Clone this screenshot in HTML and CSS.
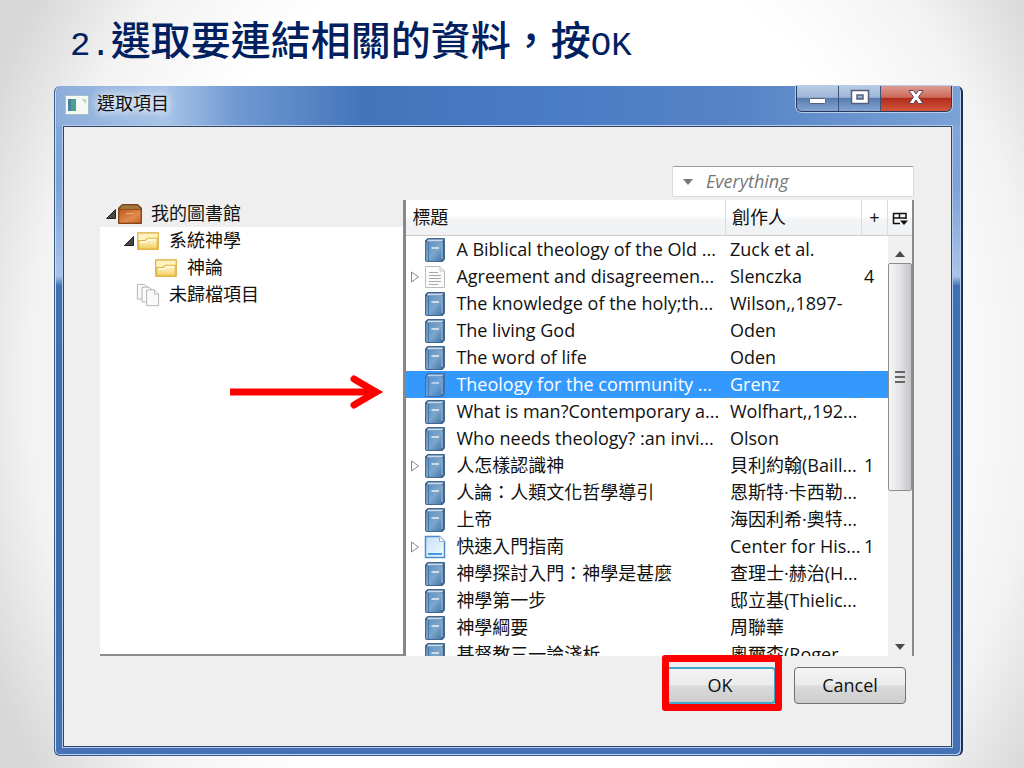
FILE: index.html
```html
<!DOCTYPE html>
<html lang="zh-Hant">
<head>
	<meta charset="UTF-8">
	<meta name="viewport" content="width=device-width, initial-scale=1.0">
	<title>選取項目</title>
	<link rel="stylesheet" href="styles.css">
</head>
<body>

	<svg class="defs" aria-hidden="true">
		<defs>
			<linearGradient id="bookFill" x1="0" y1="0" x2="1" y2="1">
				<stop offset="0" stop-color="#5f8fbf"/>
				<stop offset=".55" stop-color="#7ba6cd"/>
				<stop offset="1" stop-color="#4678a8"/>
			</linearGradient>
			<linearGradient id="folderFill" x1="0" y1="0" x2="0" y2="1">
				<stop offset="0" stop-color="#fffbe0"/>
				<stop offset="1" stop-color="#f3cd58"/>
			</linearGradient>
			<linearGradient id="boxFill" x1="0" y1="0" x2="1" y2="1">
				<stop offset="0" stop-color="#bb5a20"/>
				<stop offset=".6" stop-color="#e08a4c"/>
				<stop offset="1" stop-color="#c26428"/>
			</linearGradient>
			<linearGradient id="docFill" x1="0" y1="0" x2="1" y2="1">
				<stop offset="0" stop-color="#c4e0f8"/>
				<stop offset="1" stop-color="#f4fbff"/>
			</linearGradient>
		</defs>
		<symbol id="book" viewBox="0 0 22 26">
			<path d="M3.500 1.500H20.500V22L18.500 24.500H2.500Q1.500 24.500 1.500 23.500V3.500Z" fill="#3f6690" stroke="#41668f"/>
			<path d="M4 2.500H19.500L18 4.500H3Z" fill="#c9dcee"/>
			<rect x="2" y="5" width="15.500" height="19" rx="1" fill="url(#bookFill)"/>
			<path d="M18 5V22" stroke="#b9d0e6"/>
			<path d="M4.500 5V24" stroke="#4878a8"/>
			<path d="M7.500 11H15" stroke="#e6f0f9" stroke-width="1.500"/>
		</symbol>
		<symbol id="page" viewBox="0 0 22 26">
			<path d="M1.500 2.500H16L20.500 7V23.500H1.500Z" fill="#fbfbfb" stroke="#bcbcbc"/>
			<path d="M16 2.500V7H20.500" fill="#eee" stroke="#c8c8c8"/>
			<path d="M5 8.500H14M5 11.500H17M5 14.500H17M5 17.500H17M5 20.500H14" stroke="#aaa"/>
		</symbol>
		<symbol id="doc" viewBox="0 0 22 26">
			<path d="M1.500 2.500H15.500L20.500 7.500V23.500H1.500Z" fill="url(#docFill)" stroke="#4f8bcb" stroke-width="1.500"/>
			<path d="M15.500 2.500V7.500H20.500" fill="#fff" stroke="#8ab4de"/>
			<path d="M4 20H18" stroke="#3f9ae0" stroke-width="2"/>
		</symbol>
		<symbol id="folder" viewBox="0 0 24 20">
			<path d="M2.500 2.500H21.500V17.500H2.500Z" fill="#fff3bd" stroke="#d7ab3c"/>
			<path d="M3.500 17.500V9.500H9.500L11.500 7.500H20.500V17.500Z" fill="url(#folderFill)" stroke="#dfb23c"/>
			<path d="M5 11H10L12 9H19" fill="none" stroke="#fffdf0"/>
		</symbol>
		<symbol id="library" viewBox="0 0 26 22">
			<path d="M5 1.500H21L24.500 5V20.500H1.500V5Z" fill="#8a4a1c" stroke="#7b4118"/>
			<path d="M5.500 2.500H20.500L23 6H3Z" fill="#9b7a42"/>
			<rect x="2" y="6.500" width="22" height="13.500" rx="1" fill="url(#boxFill)" stroke="#9c4a16"/>
			<path d="M9.500 10.500H16.500" stroke="#eab084"/>
		</symbol>
		<symbol id="unfiled" viewBox="0 0 26 26">
			<g fill="#fafafa" stroke="#b0b0b0">
				<path d="M1.500 1.500H9L13 5V17.500H1.500Z"/>
				<path d="M6.500 4.500H14L18 8V20.500H6.500Z"/>
				<path d="M11.500 7.500H20L24.500 12V24.500H11.500Z"/>
				<path d="M20 7.500V12H24.500"/>
			</g>
		</symbol>
		<symbol id="open" viewBox="0 0 12 12">
			<path d="M10.500 1.500V10.500H1.500Z" fill="#484848" stroke="#222"/>
		</symbol>
		<symbol id="closed" viewBox="0 0 10 14">
			<path d="M1.500 2L8.500 7L1.500 12Z" fill="#fff" stroke="#888"/>
		</symbol>
	</svg>

	<main class="slide">
		<h1 class="heading"><span class="latin">2.</span>選取要連結相關的資料，按<span class="latin">OK</span></h1>

		<section class="window">
			<header class="titlebar">
				<svg class="app-icon" viewBox="0 0 24 20" aria-hidden="true">
					<rect x=".5" y=".5" width="23" height="19" rx="1" fill="#f6f8f6" stroke="#a9bccb"/>
					<rect x="3" y="4" width="8" height="12" fill="#4f9d8e"/>
					<path d="M3 4H6V16H3Z" fill="#4380a0"/>
					<path d="M17 4H21V9L19 7Z" fill="#b9d8c0"/>
				</svg>
				<span class="title">選取項目</span>
				<div class="caption">
					<button class="cap min" aria-label="Minimize">
						<svg width="20" height="10" viewBox="0 0 20 10"><rect x="1.500" y="2.500" width="16" height="5" rx="1" fill="#fff" stroke="#53627a"/></svg>
					</button>
					<button class="cap max" aria-label="Maximize">
						<svg width="20" height="16" viewBox="0 0 20 16"><path d="M1.500 1.500H18.500V14.500H1.500ZM7 6V10H13V6Z" fill="#fff" fill-rule="evenodd" stroke="#53627a" stroke-width="1.500"/></svg>
					</button>
					<button class="cap close" aria-label="Close">
						<svg width="18" height="16" viewBox="0 0 18 16"><path d="M2 1.500H6.500L9 5L11.500 1.500H16L11.500 8L16 14.500H11.500L9 11L6.500 14.500H2L6.500 8Z" fill="#fff" stroke="#6a4a52"/></svg>
					</button>
				</div>
			</header>

			<div class="client">
				<div class="filter">
					<svg width="10" height="6" viewBox="0 0 10 6" aria-hidden="true"><path d="M0 0H10L5 6Z" fill="#777"/></svg>
					<input type="text" placeholder="Everything" aria-label="Everything">
				</div>

				<div class="panes">
					<nav class="tree">
						<ul>
							<li class="node selected"><svg class="twisty"><use href="#open"/></svg><svg class="tree-icon"><use href="#library"/></svg>我的圖書館</li>
							<li class="node level1"><svg class="twisty"><use href="#open"/></svg><svg class="tree-icon"><use href="#folder"/></svg>系統神學</li>
							<li class="node level2"><span class="twisty"></span><svg class="tree-icon"><use href="#folder"/></svg>神論</li>
							<li class="node level1"><span class="twisty"></span><svg class="tree-icon"><use href="#unfiled"/></svg>未歸檔項目</li>
						</ul>
						<svg class="arrow" width="154" height="34" viewBox="0 0 154 34" aria-hidden="true">
							<path d="M0 17H142" stroke="#f00" stroke-width="7"/>
							<path d="M124 4L146 17L124 30" fill="none" stroke="#f00" stroke-width="7" stroke-linecap="round"/>
							<path d="M138 9L153 17L138 25Z" fill="#f00"/>
						</svg>
					</nav>

					<div class="items">
						<table>
							<thead>
								<tr><th class="col-title">標題</th><th class="col-creator">創作人</th><th class="col-count">+</th></tr>
							</thead>
							<tbody>
								<tr><td><span class="twist"></span><svg class="icon"><use href="#book"/></svg>A Biblical theology of the Old ...</td><td>Zuck et al.</td><td></td></tr>
								<tr><td><svg class="twist"><use href="#closed"/></svg><svg class="icon"><use href="#page"/></svg>Agreement and disagreemen...</td><td>Slenczka</td><td>4</td></tr>
								<tr><td><span class="twist"></span><svg class="icon"><use href="#book"/></svg>The knowledge of the holy;th...</td><td>Wilson,,1897-</td><td></td></tr>
								<tr><td><span class="twist"></span><svg class="icon"><use href="#book"/></svg>The living God</td><td>Oden</td><td></td></tr>
								<tr><td><span class="twist"></span><svg class="icon"><use href="#book"/></svg>The word of life</td><td>Oden</td><td></td></tr>
								<tr class="current"><td><span class="twist"></span><svg class="icon"><use href="#book"/></svg>Theology for the community ...</td><td>Grenz</td><td></td></tr>
								<tr><td><span class="twist"></span><svg class="icon"><use href="#book"/></svg>What is man?Contemporary a...</td><td>Wolfhart,,192...</td><td></td></tr>
								<tr><td><span class="twist"></span><svg class="icon"><use href="#book"/></svg>Who needs theology? :an invi...</td><td>Olson</td><td></td></tr>
								<tr><td><svg class="twist"><use href="#closed"/></svg><svg class="icon"><use href="#book"/></svg>人怎樣認識神</td><td>貝利約翰(Baill...</td><td>1</td></tr>
								<tr><td><span class="twist"></span><svg class="icon"><use href="#book"/></svg>人論：人類文化哲學導引</td><td>恩斯特·卡西勒...</td><td></td></tr>
								<tr><td><span class="twist"></span><svg class="icon"><use href="#book"/></svg>上帝</td><td>海因利希·奧特...</td><td></td></tr>
								<tr><td><svg class="twist"><use href="#closed"/></svg><svg class="icon"><use href="#doc"/></svg>快速入門指南</td><td>Center for His...</td><td>1</td></tr>
								<tr><td><span class="twist"></span><svg class="icon"><use href="#book"/></svg>神學探討入門：神學是甚麼</td><td>查理士·赫治(H...</td><td></td></tr>
								<tr><td><span class="twist"></span><svg class="icon"><use href="#book"/></svg>神學第一步</td><td>邸立基(Thielic...</td><td></td></tr>
								<tr><td><span class="twist"></span><svg class="icon"><use href="#book"/></svg>神學綱要</td><td>周聯華</td><td></td></tr>
								<tr><td><span class="twist"></span><svg class="icon"><use href="#book"/></svg>基督教三一論淺析</td><td>奧爾森(Roger</td><td></td></tr>
							</tbody>
						</table>
						<div class="side">
							<button class="picker" aria-label="Columns">
								<svg width="16" height="14" viewBox="0 0 16 14"><path d="M1 1.500H14V7M1.500 1V11.500H8M1 6H14M7.500 1V6" fill="none" stroke="#111" stroke-width="1.500"/><path d="M8 8.500H16L12 13Z" fill="#111"/></svg>
							</button>
							<div class="scrollbar">
								<button class="step" aria-label="Up"><svg width="10" height="6" viewBox="0 0 10 6"><path d="M5 0L10 6H0Z" fill="#4a4a4a"/></svg></button>
								<div class="thumb"><i></i><i></i><i></i></div>
								<button class="step down" aria-label="Down"><svg width="10" height="6" viewBox="0 0 10 6"><path d="M0 0H10L5 6Z" fill="#4a4a4a"/></svg></button>
							</div>
						</div>
					</div>
				</div>

				<div class="buttons">
					<span class="marked"><button class="btn default">OK</button></span>
					<button class="btn">Cancel</button>
				</div>
			</div>
		</section>
	</main>

</body>
</html>
```

FILE: styles.css
```css
* {
	box-sizing: border-box;
}
body {
	margin: 0;
	min-height: 100vh;
	font-family: 'Open Sans', 'Noto Sans CJK TC', sans-serif;
	font-size: 18px;
	line-height: 27px;
	color: #111;
	background: radial-gradient(ellipse 58% 90% at 52% 50%, #fff 0%, #fff 65%, #f2f2f2 85%, #d8d8d8 100%);
}
.defs {
	position: absolute;
	width: 0;
	height: 0;
}
button {
	font: inherit;
	color: inherit;
	padding: 0;
	border: none;
	background: none;
}
.slide {
	padding: 10px 61px 14px 54px;
}
.heading {
	margin: 0 16px 20px;
	font-size: 40px;
	line-height: 56px;
	font-weight: 500;
	font-family: 'Noto Sans CJK TC', sans-serif;
	color: #002060;
}
.latin {
	font-family: 'Liberation Mono', monospace;
	font-size: 34px;
	line-height: 1;
}

/* window frame */
.window {
	padding: 0 9px 8px 8px;
	border: 1px solid #3a5a86;
	border-top: none;
	border-right: 2px solid #1c3152;
	border-radius: 6px;
	background: linear-gradient(#85a9da 0, #7da2d6 100px, #a9c4ea 190px, #3f70b3 200px, #3b6cae 500px, #4572b6 100%);
	box-shadow: inset 1px 0 #c9dcf2, inset -1px -1px #b9d0ee;
}
.titlebar {
	display: flex;
	align-items: flex-start;
	height: 40px;
	margin: 0 -8px 0 -6px;
	padding: 0 8px 0 6px;
	background: linear-gradient(90deg, #8badda 0, #a8c4e8 12%, #6f99d2 20%, #4374bb 34%, #4a7bc5 55%, #5583c6 75%, #7ba2d6 100%);
}
.app-icon {
	width: 24px;
	height: 20px;
	margin: 9px 8px 0 2px;
}
.title {
	margin-top: 4px;
	text-shadow: 0 0 8px #fff, 0 0 12px #fff;
}
.caption {
	display: flex;
	height: 26px;
	margin-left: auto;
	border: 1px solid #26395a;
	border-top: none;
	border-radius: 0 0 6px 6px;
	overflow: hidden;
	box-shadow: 0 0 0 1px #b8cdea;
}
.cap {
	display: flex;
	align-items: center;
	justify-content: center;
	width: 42px;
	padding-bottom: 4px;
	border-right: 1px solid #3c5479;
	background: linear-gradient(#b9cbe4 0, #9db5d8 45%, #5a7db0 50%, #84a5d2 100%);
}
.cap.min {
	padding: 4px 0 0;
}
.cap.close {
	width: 70px;
	border: none;
	background: linear-gradient(#dd9a90 0, #cc6a5c 45%, #b02c1c 50%, #d4553c 100%);
}

/* dialog */
.client {
	padding: 39px 37px 42px 36px;
	border: 1px solid #2f4466;
	background: #efefef;
	box-shadow: 0 0 0 1px #b5cbe9;
}
.filter {
	display: flex;
	align-items: center;
	width: 242px;
	height: 31px;
	margin-left: auto;
	padding-left: 10px;
	border: 1px solid #dadada;
	border-top-color: #999;
	border-radius: 2px;
	background: #fff;
}
.filter input {
	flex: 1;
	min-width: 0;
	margin-left: 13px;
	padding: 0;
	border: none;
	outline: none;
	background: none;
	font: inherit;
	font-style: italic;
}
.filter input::placeholder {
	color: #777;
}
.panes {
	display: flex;
	height: 456px;
	margin-top: 3px;
}
.tree {
	position: relative;
	flex: 3 1 0;
	border-bottom: 2px solid #8a8d92;
	background: #fff;
}
.tree ul {
	margin: 0;
	padding: 0;
	list-style: none;
}
.node {
	display: flex;
	align-items: center;
	height: 27px;
	padding-left: 5px;
}
.node.selected {
	background: #efefef;
}
.level1 {
	padding-left: 23px;
}
.level2 {
	padding-left: 41px;
}
.twisty {
	width: 12px;
	height: 12px;
}
.tree-icon {
	width: 26px;
	height: 24px;
	margin-right: 8px;
}
.arrow {
	position: absolute;
	left: 130px;
	top: 175px;
}

/* item list */
.items {
	display: flex;
	flex: 5 1 0;
	min-width: 0;
	overflow: hidden;
	border-left: 3px solid #85898f;
	border-right: 2px solid #85898f;
	background: #fff;
}
table {
	flex: 1;
	align-self: flex-start;
	min-width: 0;
	table-layout: fixed;
	border-collapse: separate;
	border-spacing: 0;
}
th {
	height: 36px;
	padding: 0 6px;
	font-weight: 400;
	text-align: left;
	border-right: 1px solid #dcdcdc;
	border-bottom: 1px solid #ccc;
	background: linear-gradient(#fff 0, #fff 45%, #f3f4f6 55%, #f0f1f3 100%);
}
.col-creator {
	width: 136px;
}
.col-count {
	width: 26px;
	text-align: center;
}
td {
	height: 27px;
	padding: 0 0 0 4px;
	line-height: 25px;
	white-space: nowrap;
	overflow: hidden;
}
td:first-child {
	display: flex;
	align-items: center;
}
td:last-child {
	padding-left: 2px;
}
.twist {
	flex: none;
	width: 10px;
	height: 14px;
}
.icon {
	flex: none;
	width: 22px;
	height: 26px;
	margin: 0 10px 0 4px;
}
.current {
	color: #fff;
	background: #3399ff;
}
.current .icon {
	opacity: .8;
}
.current td {
	border-top: 1px dotted #b57a35;
	border-bottom: 1px dotted #b57a35;
}
.side {
	display: flex;
	flex-direction: column;
	width: 24px;
}
.picker {
	height: 36px;
	border-bottom: 1px solid #ccc;
	background: linear-gradient(#fff 0, #fff 45%, #f3f4f6 55%, #f0f1f3 100%);
}
.picker svg {
	vertical-align: middle;
}
.scrollbar {
	display: flex;
	flex-direction: column;
	flex: 1;
	background: #f0f0f0;
}
.step {
	height: 27px;
	line-height: 16px;
}
.down {
	margin-top: auto;
}
.thumb {
	display: flex;
	flex-direction: column;
	align-items: center;
	justify-content: center;
	gap: 3px;
	height: 228px;
	border: 1px solid #8e8e8e;
	border-radius: 2px;
	background: linear-gradient(90deg, #f5f5f5, #e6e6e8 45%, #c4c4c8);
}
.thumb i {
	width: 10px;
	height: 2px;
	background: #666;
}

/* buttons */
.buttons {
	display: flex;
	justify-content: flex-end;
	gap: 18px;
	padding: 11px 8px 0 0;
}
.btn {
	display: block;
	width: 112px;
	height: 37px;
	border: 1px solid #707070;
	border-radius: 4px;
	background: linear-gradient(#f4f4f4 0, #ebebeb 48%, #dadada 52%, #cdcdcd 100%);
}
.default {
	border: 2px solid #3fa9cc;
}
.marked {
	position: relative;
}
.marked::after {
	content: '';
	position: absolute;
	inset: -12px -6px -7px -2px;
	border: 7px solid #f00;
	border-radius: 3px;
}
```
